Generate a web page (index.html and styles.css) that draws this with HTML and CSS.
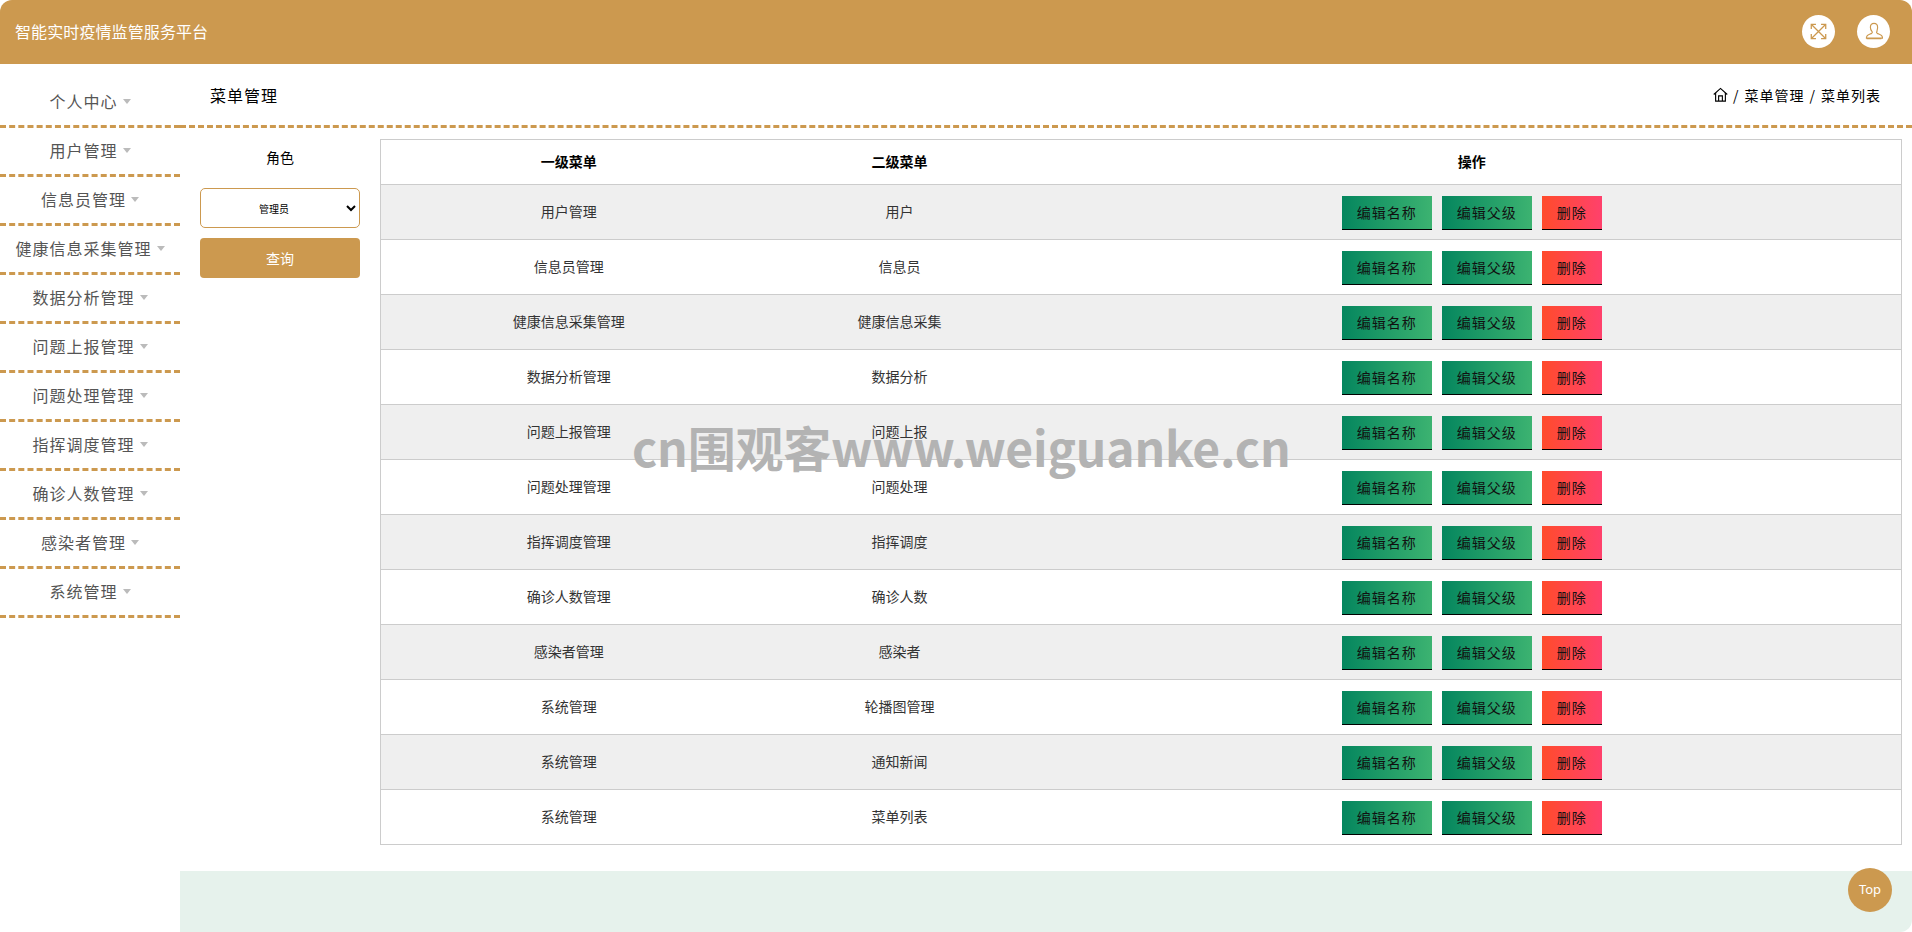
FILE: index.html
```html
<!DOCTYPE html>
<html lang="zh-CN">
<head>
<meta charset="utf-8">
<title>智能实时疫情监管服务平台</title>
<link rel="stylesheet" href="styles.css">
</head>
<body>
<div class="app">
  <header class="topbar">
    <div class="brand">智能实时疫情监管服务平台</div>
    <div class="top-actions">
      <span class="round-icon">
        <svg viewBox="0 0 20 20" width="17" height="17" fill="none" stroke="#cc994f" stroke-width="1.5">
          <path d="M2 2l16 16M18 2L2 18"/>
          <path d="M1.5 7V1.5H7M13 1.5h5.5V7M18.5 13v5.5H13M7 18.5H1.5V13"/>
        </svg>
      </span>
      <span class="round-icon">
        <svg viewBox="0 0 20 20" width="18" height="18" fill="none" stroke="#cc994f" stroke-width="1.3">
          <path d="M10 1.5c-2.6 0-4 1.800-4 4.200 0 2 .7 3.600 1.700 4.700.4.500.4 1.500-.2 2-1.200.9-4.700 1.700-5.500 3.500-.3.600-.4 1.400-.4 2.100h17.800c0-.7-.1-1.500-.4-2.100-.8-1.800-4.300-2.600-5.500-3.500-.6-.5-.6-1.500-.2-2C13.300 9.300 14 7.700 14 5.700c0-2.400-1.400-4.200-4-4.200z"/>
          <path d="M1.800 18.500h16.400" stroke-width="1.500"/>
        </svg>
      </span>
    </div>
  </header>

  <div class="body-row">
    <nav class="sidebar">
      <a class="nav-item">个人中心<i class="caret"></i></a>
      <a class="nav-item">用户管理<i class="caret"></i></a>
      <a class="nav-item">信息员管理<i class="caret"></i></a>
      <a class="nav-item">健康信息采集管理<i class="caret"></i></a>
      <a class="nav-item">数据分析管理<i class="caret"></i></a>
      <a class="nav-item">问题上报管理<i class="caret"></i></a>
      <a class="nav-item">问题处理管理<i class="caret"></i></a>
      <a class="nav-item">指挥调度管理<i class="caret"></i></a>
      <a class="nav-item">确诊人数管理<i class="caret"></i></a>
      <a class="nav-item">感染者管理<i class="caret"></i></a>
      <a class="nav-item">系统管理<i class="caret"></i></a>
    </nav>

    <main class="main">
      <div class="page-head">
        <h1 class="page-title">菜单管理</h1>
        <div class="crumbs">
          <svg class="home" viewBox="0 0 16 16" width="15" height="15" fill="none" stroke="#000" stroke-width="1.200">
            <path d="M.8 8L8 1.500 15.200 8"/>
            <path d="M2.800 6.500v8.500h10.400V6.500"/>
            <path d="M6 15V9.500h4V15"/>
          </svg>
          <span>/</span><span>菜单管理</span><span>/</span><span>菜单列表</span>
        </div>
      </div>

      <div class="content">
        <aside class="filter">
          <div class="filter-label">角色</div>
          <select class="filter-select">
            <option>管理员</option>
          </select>
          <button class="filter-btn" type="button">查询</button>
        </aside>

        <table class="menu-table">
          <colgroup>
            <col class="col-a"><col class="col-b"><col>
          </colgroup>
          <thead>
            <tr><th>一级菜单</th><th>二级菜单</th><th>操作</th></tr>
          </thead>
          <tbody>
            <tr><td>用户管理</td><td>用户</td><td><div class="ops"><button class="btn green">编辑名称</button><button class="btn green">编辑父级</button><button class="btn red">删除</button></div></td></tr>
            <tr><td>信息员管理</td><td>信息员</td><td><div class="ops"><button class="btn green">编辑名称</button><button class="btn green">编辑父级</button><button class="btn red">删除</button></div></td></tr>
            <tr><td>健康信息采集管理</td><td>健康信息采集</td><td><div class="ops"><button class="btn green">编辑名称</button><button class="btn green">编辑父级</button><button class="btn red">删除</button></div></td></tr>
            <tr><td>数据分析管理</td><td>数据分析</td><td><div class="ops"><button class="btn green">编辑名称</button><button class="btn green">编辑父级</button><button class="btn red">删除</button></div></td></tr>
            <tr><td>问题上报管理</td><td>问题上报</td><td><div class="ops"><button class="btn green">编辑名称</button><button class="btn green">编辑父级</button><button class="btn red">删除</button></div></td></tr>
            <tr><td>问题处理管理</td><td>问题处理</td><td><div class="ops"><button class="btn green">编辑名称</button><button class="btn green">编辑父级</button><button class="btn red">删除</button></div></td></tr>
            <tr><td>指挥调度管理</td><td>指挥调度</td><td><div class="ops"><button class="btn green">编辑名称</button><button class="btn green">编辑父级</button><button class="btn red">删除</button></div></td></tr>
            <tr><td>确诊人数管理</td><td>确诊人数</td><td><div class="ops"><button class="btn green">编辑名称</button><button class="btn green">编辑父级</button><button class="btn red">删除</button></div></td></tr>
            <tr><td>感染者管理</td><td>感染者</td><td><div class="ops"><button class="btn green">编辑名称</button><button class="btn green">编辑父级</button><button class="btn red">删除</button></div></td></tr>
            <tr><td>系统管理</td><td>轮播图管理</td><td><div class="ops"><button class="btn green">编辑名称</button><button class="btn green">编辑父级</button><button class="btn red">删除</button></div></td></tr>
            <tr><td>系统管理</td><td>通知新闻</td><td><div class="ops"><button class="btn green">编辑名称</button><button class="btn green">编辑父级</button><button class="btn red">删除</button></div></td></tr>
            <tr><td>系统管理</td><td>菜单列表</td><td><div class="ops"><button class="btn green">编辑名称</button><button class="btn green">编辑父级</button><button class="btn red">删除</button></div></td></tr>
          </tbody>
        </table>
      </div>

      <footer class="footer"></footer>
    </main>
  </div>

  <div class="watermark">cn围观客www.weiguanke.cn</div>
  <a class="to-top">Top</a>
</div>
</body>
</html>
```
FILE: styles.css
```css
* { box-sizing: border-box; }
html, body { margin: 0; height: 100%; background: #fff; }
body {
  font-family: "Noto Sans CJK SC", "Noto Sans", sans-serif;
  font-size: 14px;
  color: #000;
  overflow: hidden;
}
.app {
  position: relative;
  display: flex;
  flex-direction: column;
  height: 932px;
  border-radius: 12px;
  overflow: hidden;
}
.topbar {
  flex: 0 0 64px;
  display: flex;
  align-items: center;
  justify-content: space-between;
  padding: 0 22px 2px 15px;
  background: #cc994f;
}
.brand { font-size: 16px; color: #fff; line-height: 24px; letter-spacing: .1px; }
.top-actions { display: flex; gap: 22px; }
.round-icon {
  display: flex;
  align-items: center;
  justify-content: center;
  width: 33px;
  height: 33px;
  border-radius: 50%;
  background: #fff;
}
.body-row { flex: 1; display: flex; min-height: 0; }
.sidebar { flex: 0 0 180px; padding-top: 15px; }
.nav-item {
  display: block;
  height: 49px;
  line-height: 44px;
  border-bottom: 3px dashed #cc994f;
  font-size: 16px;
  letter-spacing: 1px;
  color: #555;
  text-align: center;
}
.caret {
  display: inline-block;
  margin-left: 5px;
  vertical-align: 4px;
  border-top: 5px solid #bbb;
  border-left: 4px solid transparent;
  border-right: 4px solid transparent;
}
.main { flex: 1; display: flex; flex-direction: column; min-width: 0; }
.page-head {
  flex: 0 0 64px;
  display: flex;
  align-items: center;
  justify-content: space-between;
  padding: 0 31px 0 30px;
  border-bottom: 3px dashed #cc994f;
}
.page-title { margin: 0; font-size: 16px; font-weight: 400; line-height: 24px; letter-spacing: 1px; }
.crumbs { display: flex; align-items: center; gap: 5px; font-size: 14px; line-height: 20px; letter-spacing: 1px; }
.content { display: flex; gap: 20px; padding: 11px 10px 0 20px; }
.filter { flex: 0 0 160px; display: flex; flex-direction: column; }
.filter-label { height: 49px; padding-top: 8px; text-align: center; line-height: 20px; }
.filter-select {
  height: 40px;
  border: 1px solid #cc994f;
  border-radius: 5px;
  background: #fff;
  color: #000;
  font: 10px "Noto Sans CJK SC", sans-serif;
  text-align: center;
}
.filter-btn {
  height: 40px;
  margin-top: 10px;
  border: 0;
  border-radius: 4px;
  background: #cc994f;
  color: #fff;
  font: 14px "Noto Sans CJK SC", sans-serif;
}
.menu-table {
  flex: 1;
  table-layout: fixed;
  border-collapse: collapse;
  border: 1px solid #ccc;
  align-self: flex-start;
  color: #333;
}
.col-a { width: 376px; }
.col-b { width: 286px; }
.menu-table th {
  height: 45px;
  padding: 0 0 2px;
  border: 1px solid #ccc;
  border-width: 0 0 1px;
  color: #000;
  font-weight: 700;
  text-align: center;
}
.menu-table td {
  height: 55px;
  padding: 0 0 2px;
  border-bottom: 1px solid #ccc;
  text-align: center;
}
.menu-table tbody tr:nth-child(odd) { background: #efefef; }
.ops { display: flex; justify-content: center; gap: 10px; padding-top: 4px; }
.btn {
  height: 34px;
  padding: 0 0 2px;
  border: 0;
  border-bottom: 1px solid #000;
  color: #111;
  font: 14px "Noto Sans CJK SC", sans-serif;
  letter-spacing: 1px;
}
.green { width: 90px; background: linear-gradient(90deg, #05865e, #3cb371); }
.red { width: 60px; background: linear-gradient(90deg, #ff4b2b, #ff416c); }
.footer { margin-top: auto; height: 61px; background: #e6f2ec; }
.watermark {
  position: absolute;
  left: 632px;
  top: 411px;
  font-size: 48px;
  font-weight: 700;
  letter-spacing: -.2px;
  line-height: 70px;
  color: #b3b3b3;
  white-space: nowrap;
  pointer-events: none;
}
.to-top {
  position: absolute;
  right: 20px;
  bottom: 20px;
  width: 44px;
  height: 44px;
  border-radius: 50%;
  background: #cc994f;
  color: #fff;
  font-family: "Noto Sans", sans-serif;
  font-size: 13px;
  font-weight: 400;
  line-height: 43px;
  text-align: center;
}
```
